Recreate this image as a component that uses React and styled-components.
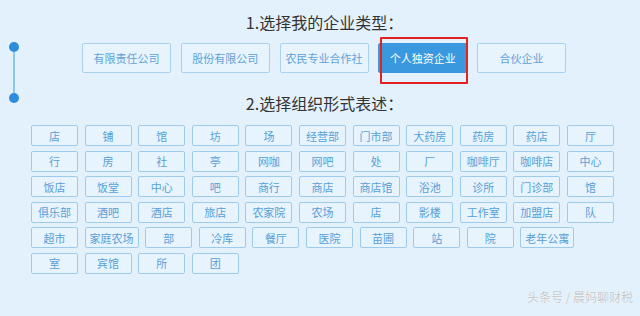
import React from 'react'
import styled, { createGlobalStyle } from 'styled-components'

const types = ['有限责任公司', '股份有限公司', '农民专业合作社', '个人独资企业', '合伙企业']
const selectedType = '个人独资企业'

const forms = [
  '店', '铺', '馆', '坊', '场', '经营部', '门市部', '大药房', '药房', '药店', '厅',
  '行', '房', '社', '亭', '网咖', '网吧', '处', '厂', '咖啡厅', '咖啡店', '中心',
  '饭店', '饭堂', '中心', '吧', '商行', '商店', '商店馆', '浴池', '诊所', '门诊部', '馆',
  '俱乐部', '酒吧', '酒店', '旅店', '农家院', '农场', '店', '影楼', '工作室', '加盟店', '队',
  '超市', '家庭农场', '部', '冷库', '餐厅', '医院', '苗圃', '站', '院', '老年公寓',
  '室', '宾馆', '所', '团',
]

const App = () => {
  return (
    <>
      <GlobalStyle />
      <Page>
        <Rail>
          <Dot />
          <Line />
          <Dot />
        </Rail>
        <Content>
          <Title>1.选择我的企业类型：</Title>
          <TypeRow>
            {types.map((t) => (
              <TypeButton key={t} $active={t === selectedType}>
                {t}
                {t === selectedType && <Highlight />}
              </TypeButton>
            ))}
          </TypeRow>
          <Title $second>2.选择组织形式表述：</Title>
          <FormGrid>
            {forms.map((f, i) => (
              <FormTag key={i}>{f}</FormTag>
            ))}
          </FormGrid>
        </Content>
        <Watermark>头条号 / 晨妈聊财税</Watermark>
      </Page>
    </>
  )
}

const GlobalStyle = createGlobalStyle`
  body {
    margin: 0;
    background: #e2f1fb;
    font-family: "Noto Sans CJK SC", "Noto Sans", sans-serif;
  }
`

const Page = styled.div`
  position: relative;
  display: grid;
  grid-template-columns: 28px 1fr 28px;
  width: 640px;
  height: 316px;
  overflow: hidden;
  background: #e2f1fb;
`

const Rail = styled.div`
  display: flex;
  flex-direction: column;
  align-items: center;
  padding-top: 42px;
`

const Dot = styled.div`
  width: 10px;
  height: 10px;
  border-radius: 50%;
  background: #2d8ddb;
`

const Line = styled.div`
  width: 2px;
  height: 41px;
  background: #8fc6ee;
`

const Content = styled.div`
  display: flex;
  flex-direction: column;
`

const Title = styled.div`
  margin-top: ${(p) => (p.$second ? '18px' : '10px')};
  font-size: 16px;
  line-height: 24px;
  color: #333;
  text-align: center;
`

const TypeRow = styled.div`
  display: flex;
  gap: 9.75px;
  margin-top: 9px;
  padding-left: 54px;
`

const TypeButton = styled.div`
  position: relative;
  display: flex;
  align-items: center;
  justify-content: center;
  box-sizing: border-box;
  width: 89px;
  height: 30px;
  border: 1px solid ${(p) => (p.$active ? '#3a98de' : '#a9d2ef')};
  border-radius: 2px;
  background: ${(p) => (p.$active ? '#3a98de' : '#e8f4fd')};
  color: ${(p) => (p.$active ? '#ffffff' : '#5ea2d8')};
  font-size: 11px;
  white-space: nowrap;
`

const Highlight = styled.div`
  position: absolute;
  left: 1px;
  right: -2px;
  top: -7px;
  bottom: -12px;
  border: 2px solid #e3211f;
  border-radius: 1px;
`

const FormGrid = styled.div`
  display: flex;
  flex-wrap: wrap;
  gap: 4.5px 6.6px;
  width: 590px;
  margin-top: 10px;
  margin-left: 3px;
`

const FormTag = styled.div`
  display: flex;
  align-items: center;
  justify-content: center;
  box-sizing: border-box;
  min-width: 47px;
  height: 21px;
  padding: 0 4px;
  border: 1px solid #9fcbeb;
  border-radius: 2px;
  background: #e8f4fd;
  color: #56a0d8;
  font-size: 11px;
  white-space: nowrap;
`

const Watermark = styled.div`
  position: absolute;
  right: 7px;
  bottom: 11px;
  font-size: 12px;
  color: #c3c8cd;
  text-shadow: 0 0 1px #ffffff, 0 0 1px #ffffff;
`

export default App
